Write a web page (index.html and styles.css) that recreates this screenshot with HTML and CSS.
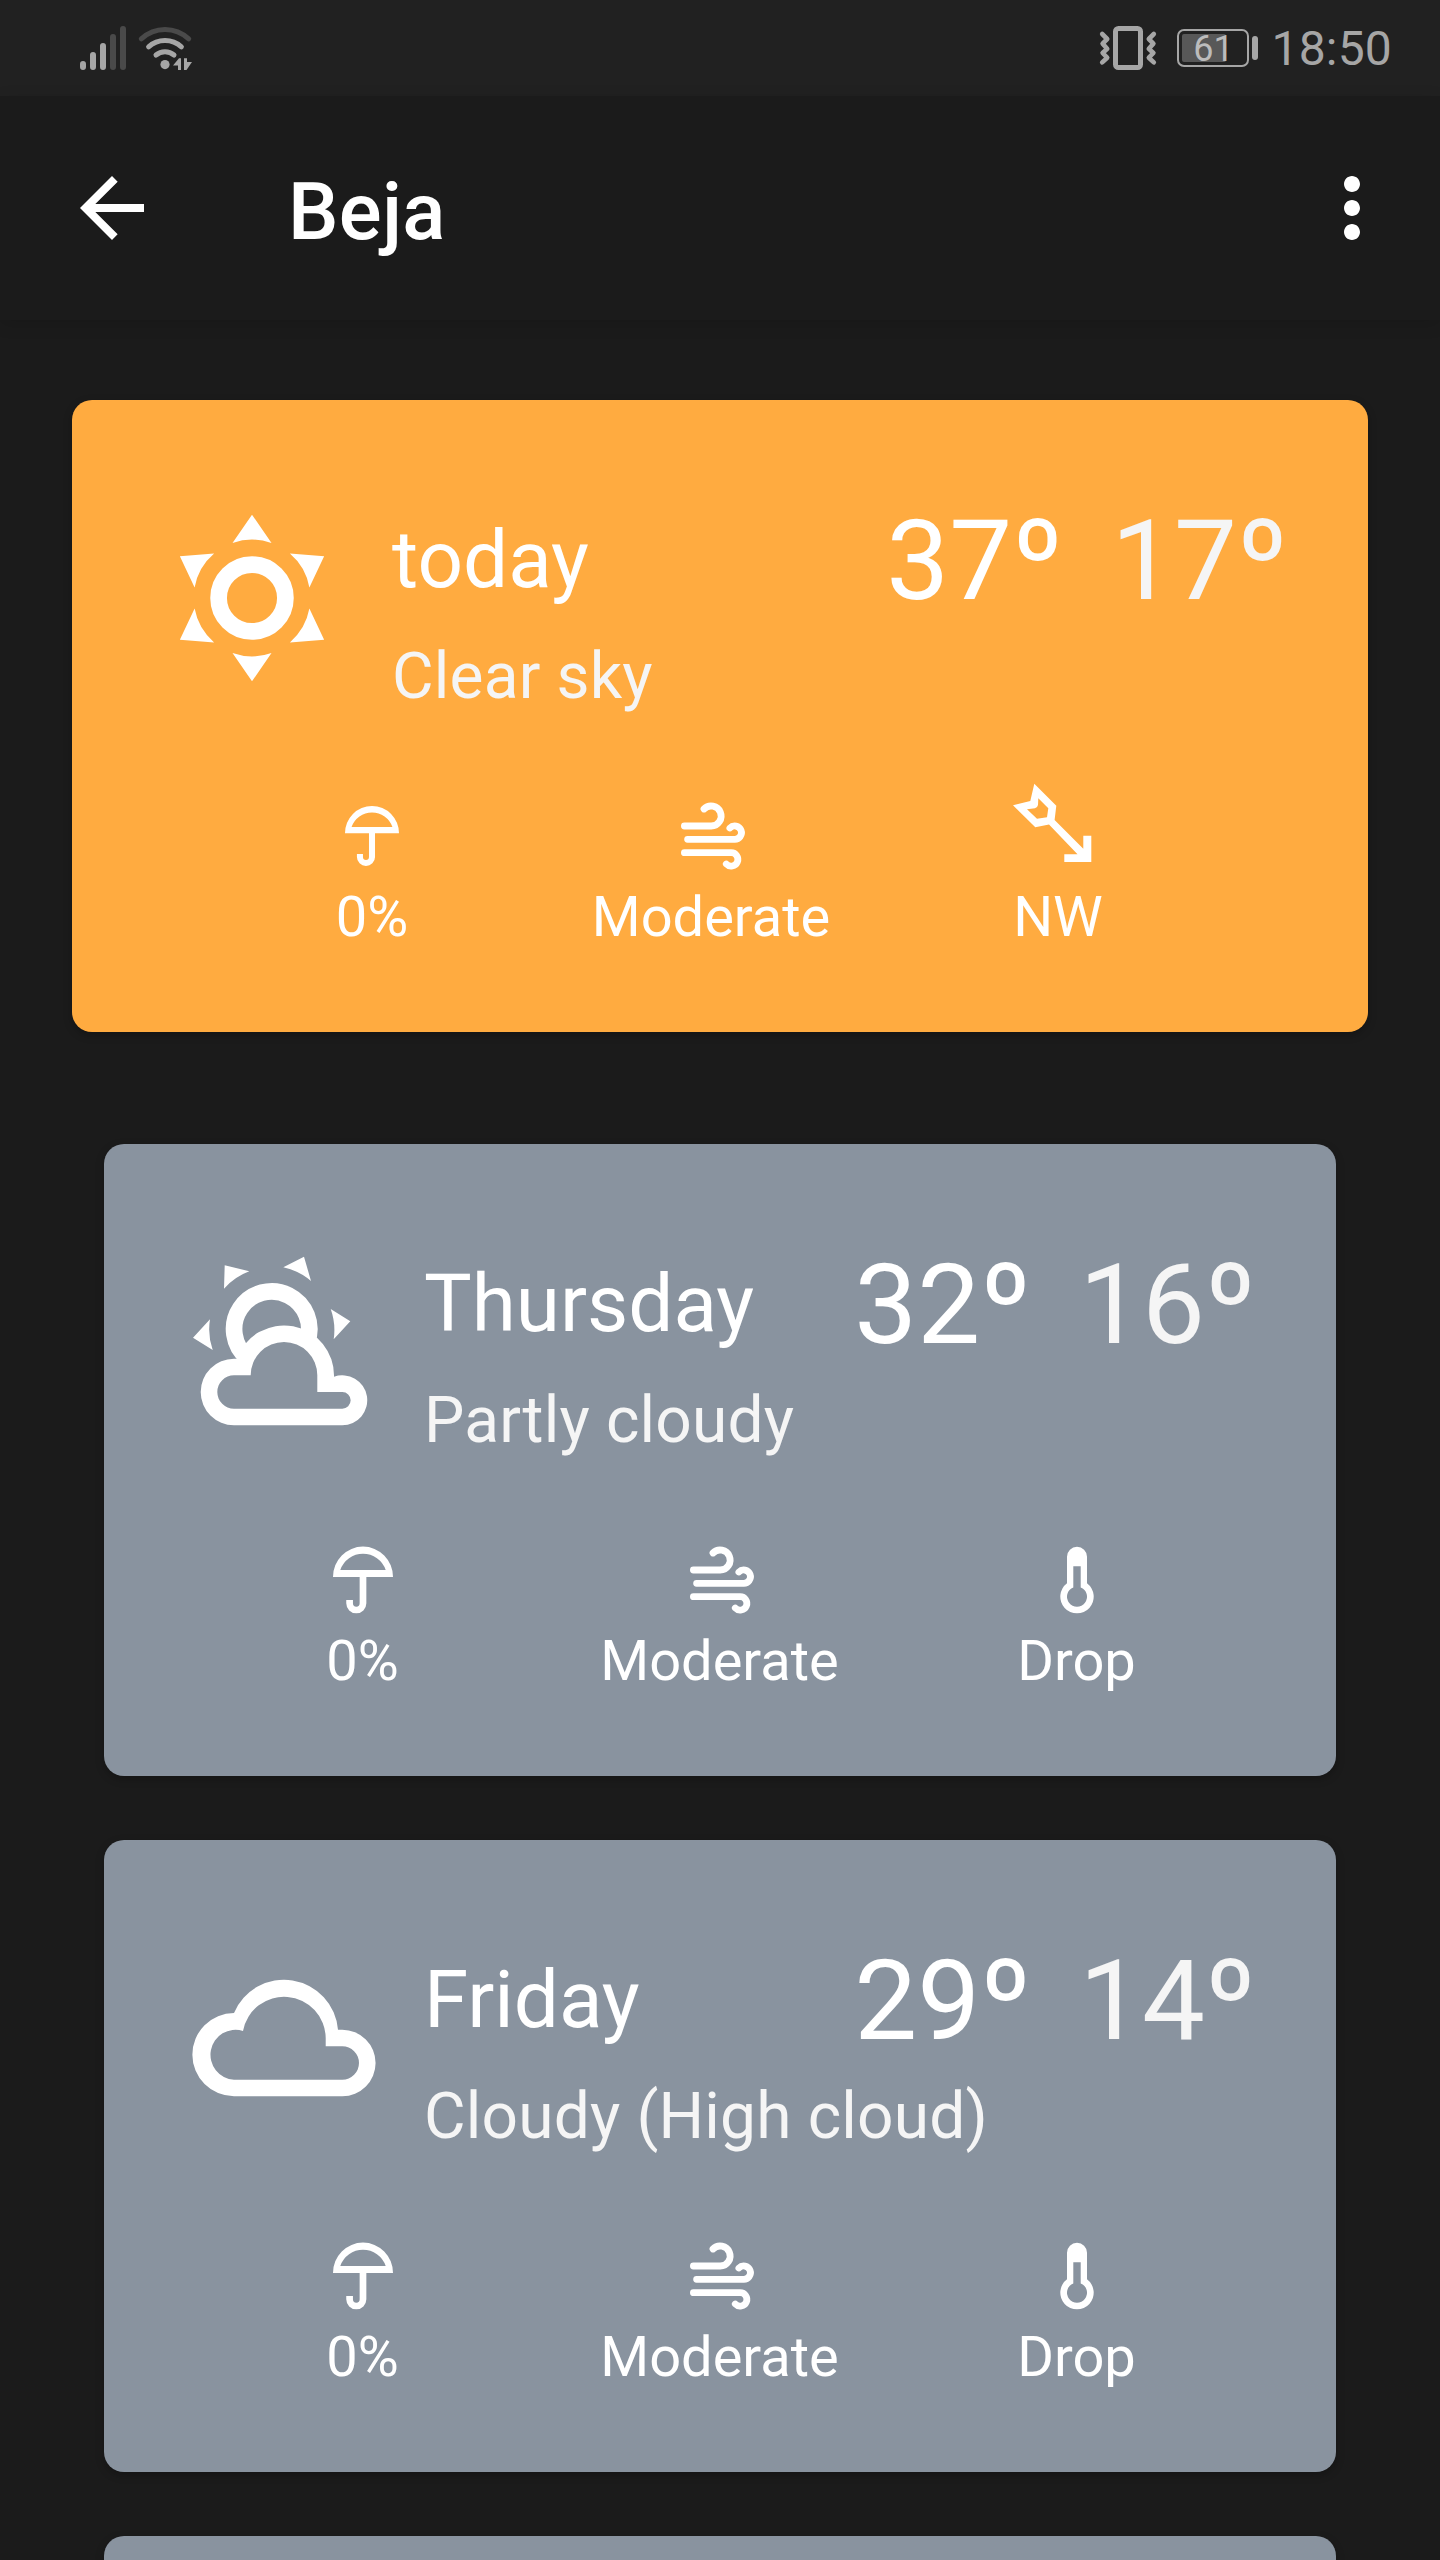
FILE: index.html
```html
<!DOCTYPE html>
<html lang="en">
<head>
<meta charset="utf-8">
<title>Beja</title>
<link rel="stylesheet" href="styles.css">
</head>
<body>
<svg class="defs" width="0" height="0" aria-hidden="true">
  <symbol id="umbrella" viewBox="0 0 80 80">
    <path fill="currentColor" fill-rule="evenodd" d="M10 37A30 30.4 0 0 1 70 37ZM17.3 30A24 24 0 0 1 62.7 30Z"/>
    <path fill="none" stroke="currentColor" stroke-width="6.7" d="M40 36V63.3A6.7 6.7 0 0 1 26.6 63.3V60"/>
  </symbol>
  <symbol id="wind" viewBox="0 0 80 80">
    <g fill="none" stroke="currentColor" stroke-width="6.8" stroke-linecap="round">
      <path d="M13.4 30H40A10 10 0 1 0 33 13"/>
      <path d="M16.6 43.3H63.2A6.7 6.7 0 1 0 58.9 32"/>
      <path d="M13.4 56.7H60A6.7 6.7 0 1 1 55.3 68"/>
    </g>
  </symbol>
  <symbol id="thermometer" viewBox="0 0 80 80">
    <path fill="currentColor" fill-rule="evenodd" d="M30 16.7A10 10 0 0 1 50 16.7V43.3A16.7 16.7 0 1 1 30 43.3ZM36.3 26.3V47.4A10 10 0 1 0 43.7 47.4V26.3Z"/>
  </symbol>
</svg>

<header class="status">
  <svg class="status-left" width="120" height="96" viewBox="76 0 120 96">
    <g stroke="#a6a6a6" stroke-width="6" stroke-linecap="round">
      <path d="M83 64V67M93 55V67M103 46V67"/>
      <path stroke="#4a4a4a" d="M113 37V67M123 29V67"/>
    </g>
    <g fill="none" stroke="#a6a6a6" stroke-width="5" stroke-linecap="round">
      <path stroke="#4a4a4a" d="M141.3 38.8Q151.5 29.4 165 29.4T188.7 38.8"/>
      <path d="M148.6 46.8Q155.5 40.6 165 40.6T181.4 46.8"/>
      <path d="M156 55Q159.8 51.7 165 51.7T174 55"/>
    </g>
    <circle cx="165" cy="64.6" r="4.6" fill="#a6a6a6"/>
    <path fill="#a6a6a6" d="M173 65.5L179 58.3H181V70H178V65.5ZM184 58.3H187V62H192L186.5 70H184Z"/>
  </svg>
  <div class="status-right">
    <svg width="60" height="48" viewBox="1098 24 60 48">
      <rect x="1115.5" y="28.5" width="25" height="39" rx="3" fill="none" stroke="#a6a6a6" stroke-width="5"/>
      <g fill="none" stroke="#a6a6a6" stroke-width="4.6" stroke-linecap="round" stroke-linejoin="round">
        <path d="M1102.2 34L1107.2 39L1102.6 43.6L1107.2 48.7L1102.6 53L1107.2 57.7L1102.2 62.4"/>
        <path d="M1153.8 34L1148.8 39L1153.4 43.6L1148.8 48.7L1153.4 53L1148.8 57.7L1153.8 62.4"/>
      </g>
    </svg>
    <div class="battery">
      <div class="battery-body"><div class="battery-fill" style="width:70%"></div><span class="battery-text">61</span></div>
      <div class="battery-nub"></div>
    </div>
    <span class="clock">18:50</span>
  </div>
</header>

<nav class="appbar">
  <svg width="96" height="96" viewBox="0 0 24 24"><path fill="#fff" d="M20 11H7.83l5.59-5.59L12 4l-8 8 8 8 1.41-1.41L7.83 13H20z"/></svg>
  <h1 class="appbar-title">Beja</h1>
  <svg width="96" height="96" viewBox="0 0 24 24"><path fill="#fff" d="M12 8c1.1 0 2-.9 2-2s-.9-2-2-2-2 .9-2 2 .9 2 2 2zm0 2c-1.1 0-2 .9-2 2s.9 2 2 2 2-.9 2-2-.9-2-2-2zm0 6c-1.1 0-2 .9-2 2s.9 2 2 2 2-.9 2-2-.9-2-2-2z"/></svg>
</nav>

<main class="days">
  <section class="card card-today">
    <div class="card-head">
      <svg class="condition" viewBox="-100 -100 200 200">
        <circle r="33.4" fill="none" stroke="currentColor" stroke-width="16.7"/>
        <g fill="currentColor">
          <path d="M0 -83.3L19.5 -55A58.3 58.3 0 0 0 -19.5 -55Z"/>
          <path transform="rotate(60)" d="M0 -83.3L19.5 -55A58.3 58.3 0 0 0 -19.5 -55Z"/>
          <path transform="rotate(120)" d="M0 -83.3L19.5 -55A58.3 58.3 0 0 0 -19.5 -55Z"/>
          <path transform="rotate(180)" d="M0 -83.3L19.5 -55A58.3 58.3 0 0 0 -19.5 -55Z"/>
          <path transform="rotate(240)" d="M0 -83.3L19.5 -55A58.3 58.3 0 0 0 -19.5 -55Z"/>
          <path transform="rotate(300)" d="M0 -83.3L19.5 -55A58.3 58.3 0 0 0 -19.5 -55Z"/>
        </g>
      </svg>
      <div class="summary">
        <div class="summary-row">
          <h2 class="day">today</h2>
          <div class="temps"><span>37º</span><span class="low">17º</span></div>
        </div>
        <p class="desc">Clear sky</p>
      </div>
    </div>
    <div class="metrics">
      <div class="metric"><svg class="icon icon-small" viewBox="0 0 80 80"><use href="#umbrella"/></svg><span>0%</span></div>
      <div class="metric"><svg class="icon" viewBox="0 0 80 80"><use href="#wind"/></svg><span>Moderate</span></div>
      <div class="metric"><svg class="icon" viewBox="0 0 80 80"><path fill="currentColor" fill-rule="evenodd" d="M16.3 -12.3L38.3 9.7L36.6 24L65.3 52.7V39.7H73.3V66H46.3V58.3H59.5L31 28.5L17.3 31.3L-5 9.3L12.3 5ZM20.3 2.3L30.3 12.3L29 21.3L19 22.7L9 13.3L17 12.3Q19.5 11.5 20 9Z"/></svg><span>NW</span></div>
    </div>
  </section>

  <section class="card">
    <div class="card-head">
      <svg class="condition" viewBox="0 0 200 200">
        <path fill="none" stroke="currentColor" stroke-width="16.7" d="M63.5 115.8A37.6 37.6 0 1 1 123 99.9"/>
        <path fill="currentColor" fill-rule="evenodd" d="M50 116.7H52.9A50 50 0 0 1 150 134.7A25 25 0 1 1 158.3 183.3H50A33.3 33.3 0 0 1 50 116.7ZM50 133.3A16.7 16.7 0 0 0 50 166.7H158.3A8.3 8.3 0 0 0 158.3 150H133.3V133.3A33.3 33.3 0 0 0 66.7 133.3Z"/>
        <path fill="currentColor" d="M40.7 23.3L65.3 29.3A62.5 62.5 0 0 0 40 46.7ZM120 14.7L127 39A62.5 62.5 0 0 0 99.3 25.3ZM26 77.3L9 95.7L28.7 108A62.5 62.5 0 0 1 26 77.3ZM146.7 67L166.3 79.3L149.7 97.3A62.5 62.5 0 0 0 146.7 67Z"/>
      </svg>
      <div class="summary">
        <div class="summary-row">
          <h2 class="day">Thursday</h2>
          <div class="temps"><span>32º</span><span class="low">16º</span></div>
        </div>
        <p class="desc">Partly cloudy</p>
      </div>
    </div>
    <div class="metrics">
      <div class="metric"><svg class="icon" viewBox="0 0 80 80"><use href="#umbrella"/></svg><span>0%</span></div>
      <div class="metric"><svg class="icon" viewBox="0 0 80 80"><use href="#wind"/></svg><span>Moderate</span></div>
      <div class="metric"><svg class="icon" viewBox="0 0 80 80"><use href="#thermometer"/></svg><span>Drop</span></div>
    </div>
  </section>

  <section class="card">
    <div class="card-head">
      <svg class="condition" viewBox="0 0 200 200">
        <path fill="currentColor" fill-rule="evenodd" d="M50 75A54.2 54.2 0 0 1 154 91.7H158.3A33.3 33.3 0 0 1 158.3 158.3H50A41.65 41.65 0 0 1 50 75ZM59 92.9A25 25 0 1 0 50 141.7H158.3A16.7 16.7 0 0 0 158.3 108.3H141.7V100A41.7 41.7 0 0 0 59 92.9Z"/>
      </svg>
      <div class="summary">
        <div class="summary-row">
          <h2 class="day">Friday</h2>
          <div class="temps"><span>29º</span><span class="low">14º</span></div>
        </div>
        <p class="desc">Cloudy (High cloud)</p>
      </div>
    </div>
    <div class="metrics">
      <div class="metric"><svg class="icon" viewBox="0 0 80 80"><use href="#umbrella"/></svg><span>0%</span></div>
      <div class="metric"><svg class="icon" viewBox="0 0 80 80"><use href="#wind"/></svg><span>Moderate</span></div>
      <div class="metric"><svg class="icon" viewBox="0 0 80 80"><use href="#thermometer"/></svg><span>Drop</span></div>
    </div>
  </section>

  <section class="card card-peek"></section>
</main>
</body>
</html>
```
FILE: styles.css
```css
* {
  box-sizing: border-box;
}

html,
body {
  height: 2560px;
  overflow: hidden;
}

body {
  margin: 0;
  background: #1b1b1b;
  color: #fff;
  font-family: Roboto, "Noto Sans", sans-serif;
}

h1,
h2,
p {
  margin: 0;
  font-weight: 400;
}

svg {
  display: block;
  flex: none;
}

.defs {
  position: absolute;
}

.status {
  display: flex;
  justify-content: space-between;
  height: 96px;
  padding: 0 48px 0 76px;
  background: #212121;
}

.status-right {
  display: flex;
  align-items: center;
  color: #a6a6a6;
}

.battery {
  display: flex;
  align-items: center;
  gap: 3px;
  margin: 0 13px 0 19px;
}

.battery-body {
  position: relative;
  width: 72px;
  height: 38px;
  padding: 3px;
  border: 2px solid #a6a6a6;
  border-radius: 7px;
}

.battery-fill {
  height: 28px;
  border-radius: 2px;
  background: #585858;
}

.battery-text {
  position: absolute;
  inset: 0;
  color: #bcbcbc;
  font-size: 36px;
  line-height: 36px;
  text-align: center;
}

.battery-nub {
  width: 6px;
  height: 24px;
  border-radius: 3px;
  background: #a6a6a6;
}

.clock {
  padding-top: 2px;
  font-size: 48px;
  line-height: 56px;
  letter-spacing: 0.2px;
}

.appbar {
  display: flex;
  align-items: center;
  height: 224px;
  padding: 0 40px 0 64px;
  box-shadow: 0 4px 16px rgba(0, 0, 0, 0.12);
}

.appbar-title {
  flex: 1;
  margin-left: 128px;
  padding-top: 8px;
  font-size: 80px;
  font-weight: 500;
  line-height: 94px;
  letter-spacing: 0.3px;
}

.days {
  display: flex;
  flex-direction: column;
  gap: 64px;
  height: 2240px;
  padding: 80px 104px 0;
}

.card {
  flex: none;
  height: 632px;
  padding-top: 95px;
  border-radius: 20px;
  background: #89939f;
  box-shadow: 0 3px 8px rgba(0, 0, 0, 0.25);
}

.card-today {
  margin: 0 -32px 48px;
  background: #ffab40;
}

/* Only the top edge of the next day fits on the screen. */
.card-peek {
  height: 24px;
  padding: 0;
  border-radius: 20px 20px 0 0;
}

.card-head {
  display: flex;
  gap: 40px;
  height: 301px;
  padding: 0 80px;
}

.condition {
  width: 200px;
  height: 200px;
  margin-top: 3px;
}

.summary {
  flex: 1;
}

.summary-row {
  display: flex;
  justify-content: space-between;
  height: 144px;
}

.day {
  margin-top: 18px;
  font-size: 80px;
  line-height: 94px;
}

.temps {
  display: flex;
  gap: 48px;
  font-size: 112px;
  line-height: 132px;
}

.low,
.desc {
  color: #f5f5f5;
}

.desc {
  font-size: 64px;
  line-height: 76px;
  letter-spacing: 0.17px;
}

.metrics {
  display: grid;
  grid-template-columns: repeat(3, 357px);
  padding-left: 80px;
}

.card-today .metrics {
  grid-template-columns: 340px 338px 356px;
  padding-left: 130px;
}

.metric {
  display: flex;
  flex-direction: column;
  align-items: center;
  gap: 8px;
  font-size: 56px;
  line-height: 66px;
}

.icon {
  width: 80px;
  height: 80px;
  overflow: visible;
}

.icon-small {
  width: 72px;
  height: 72px;
  margin: 4px;
}
```
